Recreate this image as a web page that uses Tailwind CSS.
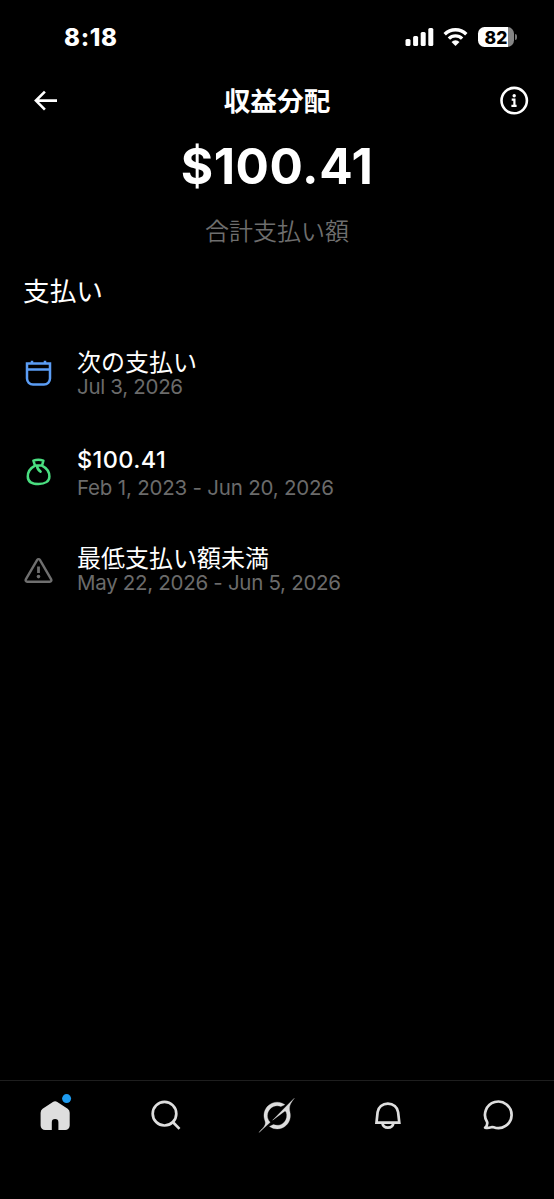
<!DOCTYPE html>
<html lang="ja">
<head>
<meta charset="utf-8">
<title>収益分配</title>
<script src="https://cdn.jsdelivr.net/npm/@tailwindcss/browser@4"></script>
</head>
<body class="bg-black">
<div class="flex h-[1199px] w-[554px] flex-col overflow-hidden bg-black font-['Inter','Noto_Sans_CJK_JP',sans-serif] text-white">
  <!-- Status bar -->
  <div class="flex h-[74px] shrink-0 items-center justify-between pr-[37px] pl-[64px]">
    <div class="pt-[1px] text-[24px] leading-[30px] font-extrabold tracking-[0.7px]">8:18</div>
    <div class="flex items-center">
      <svg class="h-[20px] w-[30px]" viewBox="0 0 30 20" fill="#fff"><rect x="0.5" y="12" width="5" height="7" rx="1.5"/><rect x="8.1" y="9" width="5" height="10" rx="1.5"/><rect x="15.7" y="5" width="5" height="14" rx="1.5"/><rect x="23.3" y="1" width="5" height="18" rx="1.5"/></svg>
      <svg class="ml-[8px] h-[20px] w-[26px]" viewBox="0 0 26 20" fill="none" stroke="#fff" stroke-width="3.4"><path d="M1.700 7.200a15.300 15.300 0 0 1 21.600 0M5.900 11.600a9.400 9.400 0 0 1 13.200 0"/><path d="M12.500 19l-4-4.100a5.800 5.800 0 0 1 8 0z" fill="#fff" stroke="none"/></svg>
      <div class="ml-[9px] flex h-[20px] w-[36px] items-center justify-center overflow-hidden rounded-[6.5px] bg-linear-to-r from-white from-82% to-[#858585] to-82% text-[17.5px] leading-[19px] font-extrabold text-black">82</div>
      <div class="ml-[1px] h-[6px] w-[2px] rounded-r-full bg-[#777]"></div>
    </div>
  </div>
  <!-- Header -->
  <div class="flex h-[54px] shrink-0 items-center justify-between pr-[24px] pl-[30px]">
    <svg class="h-[32px] w-[32px]" viewBox="0 0 32 32" fill="none" stroke="#fff" stroke-width="2.6"><path d="M27 15.6H6M14.9 6.6L5.9 15.6l9 9"/></svg>
    <h1 class="mr-[6px] text-[26.7px] leading-[40px] font-bold">収益分配</h1>
    <svg class="h-[32px] w-[32px]" viewBox="0 0 32 32" fill="none" stroke="#fff" stroke-width="2.6"><circle cx="16.2" cy="15.6" r="12.7"/><path d="M13.7 14.6h2.7v7M13.4 20.8h5.2" stroke-width="2.2"/><circle cx="16.2" cy="10.8" r="1.7" fill="#fff" stroke="none"/></svg>
  </div>
  <!-- Total -->
  <div class="flex h-[128px] shrink-0 flex-col items-center">
    <div class="mt-[8px] text-[49.5px] leading-[60px] font-bold tracking-[0.6px]">$100.41</div>
    <div class="mt-[18px] text-[24px] leading-[36px] font-[350] text-[#6e6e6e]">合計支払い額</div>
  </div>
  <h2 class="ml-[23px] h-[67px] shrink-0 pt-[15px] text-[26.7px] leading-[40px]">支払い</h2>
  <!-- Payment list -->
  <div class="flex shrink-0 flex-col pl-[22px]">
    <div class="flex h-[99px] items-center gap-[23px]">
      <svg class="h-[32px] w-[32px]" viewBox="0 0 32 32" fill="none" stroke="#5b9df5" stroke-width="2.5"><path d="M5 6.6h23v15a6 6 0 0 1-6 6H11a6 6 0 0 1-6-6zM5 12.6h23M10 3.8v3M23 3.8v3"/></svg>
      <div class="pt-[4px]"><div class="text-[24px] leading-[25px]">次の支払い</div><div class="text-[20.5px] leading-[24px] tracking-[-0.3px] text-[#6b6b6b]">Jul 3, 2026</div></div>
    </div>
    <div class="flex h-[99px] items-center gap-[23px]">
      <svg class="h-[32px] w-[32px]" viewBox="0 0 32 32" fill="none" stroke="#4ade80" stroke-width="2.5" stroke-linejoin="round" stroke-linecap="round"><path d="M11.4 4.6q5-1.6 10 0l-1.4 5h-7zM13 9.6C8.500 12 5.800 16.500 5.800 20.400c0 5 4.200 7.600 10.700 7.600s10.900-2.600 10.900-7.600c0-3.900-2.900-8.400-7.400-10.800M15 10c.3 2.600 1.500 4.200 3.600 5.600"/></svg>
      <div class="pt-[5px]"><div class="text-[23.5px] leading-[28px] font-medium tracking-[0.4px]">$100.41</div><div class="text-[20.5px] leading-[28px] tracking-[-0.2px] text-[#6b6b6b]">Feb 1, 2023 - Jun 20, 2026</div></div>
    </div>
    <div class="flex h-[99px] items-center gap-[23px]">
      <svg class="h-[32px] w-[32px]" viewBox="0 0 32 32" fill="none" stroke="#6f6f6f" stroke-width="2.400"><path d="M15.200 4.900a1.600 1.600 0 0 1 2.700 0l11.300 19.400a1.600 1.600 0 0 1-1.400 2.400H5.200a1.600 1.600 0 0 1-1.400-2.400z"/><path d="M16.500 11.500v6.500" stroke-width="2.800"/><circle cx="16.500" cy="21.600" r="1.800" fill="#6f6f6f" stroke="none"/></svg>
      <div><div class="text-[24px] leading-[25px]">最低支払い額未満</div><div class="text-[20.5px] leading-[24px] tracking-[-0.29px] text-[#6b6b6b]">May 22, 2026 - Jun 5, 2026</div></div>
    </div>
  </div>
  <!-- Tab bar -->
  <nav class="mt-auto grid h-[119px] shrink-0 grid-cols-5 justify-items-center border-t border-[#1e1e1e] pt-[14px]">
    <svg class="h-[40px] w-[40px] overflow-visible" viewBox="0 0 40 40"><path fill="#dedede" d="M17.900 6.900a4 4 0 0 1 4.400 0l10.400 6.900q2 1.500 2 4v12.700a4.500 4.500 0 0 1-4.500 4.500h-6.800v-7.600a3.300 3.300 0 0 0-6.600 0V35h-6.700a4.500 4.500 0 0 1-4.500-4.500V17.800q0-2.500 2-4z"/><circle cx="31.600" cy="3.600" r="4.500" fill="#1d9bf0"/></svg>
    <svg class="h-[40px] w-[40px]" viewBox="0 0 40 40" fill="none" stroke="#dedede" stroke-width="2.700"><circle cx="18.500" cy="18.700" r="11.800"/><path d="M26.800 27l6.700 6.900"/></svg>
    <svg class="h-[40px] w-[40px]" viewBox="0 0 40 40"><path fill="#dedede" stroke="#dedede" stroke-width=".3" transform="translate(2 3.200) scale(1.070)" d="M12.745 20.540l10.970-8.190c.539-.4 1.307-.244 1.564.38 1.349 3.288.746 7.241-1.938 9.955-2.683 2.714-6.417 3.310-9.830 1.954l-3.728 1.745c5.347 3.697 11.840 2.782 15.898-1.324 3.219-3.255 4.216-7.692 3.284-11.693l.008.009c-1.351-5.878.332-8.227 3.782-13.031L33 0l-4.540 4.590v-.014L12.743 20.544m-2.263 1.987c-3.837-3.707-3.175-9.446.1-12.755 2.420-2.449 6.388-3.448 9.852-1.979l3.720-1.737c-.67-.49-1.530-1.017-2.515-1.387-4.455-1.854-9.789-.931-13.410 2.728-3.483 3.523-4.579 8.940-2.697 13.561 1.405 3.454-.899 5.898-3.220 8.364C1.490 30.200.666 31.074 0 32l10.478-9.466"/></svg>
    <svg class="h-[40px] w-[40px]" viewBox="0 0 40 40" fill="none" stroke="#dedede" stroke-width="2.700"><path d="M8.500 27.600L9.600 17.200a10.300 9.600 0 0 1 20.500 0l1.200 10.400zM14.300 28a5.700 5.700 0 0 0 11.200 0"/></svg>
    <svg class="h-[40px] w-[40px]" viewBox="0 0 40 40" fill="none" stroke="#dedede" stroke-width="2.700" stroke-linejoin="round"><path d="M8.200 27.200A13.300 13.300 0 1 1 14.600 32.300q-1.300-.5-2.600 0-3 1-5.900.4 2.600-2.300 2.100-5.500z"/></svg>
  </nav>
</div>
</body>
</html>
